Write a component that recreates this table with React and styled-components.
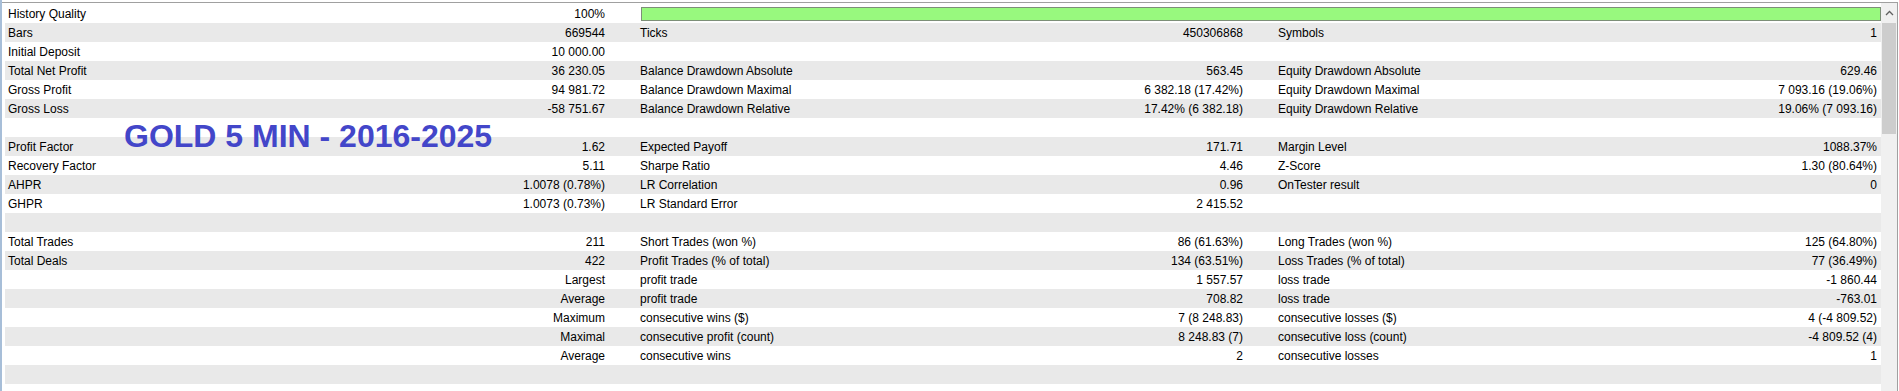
import React from "react";
import styled, { createGlobalStyle } from "styled-components";

const GlobalStyle = createGlobalStyle`
  html, body { margin: 0; padding: 0; background: #ffffff; overflow: hidden; }
  #root { width: 1899px; height: 391px; }
`;

const Frame = styled.div`
  display: flex;
  width: 1899px;
  height: 391px;
  box-sizing: border-box;
  padding-top: 2px;
  border-left: 2px solid #a7bed8;
  overflow: hidden;
  font-family: "Liberation Sans", Arial, sans-serif;
  font-size: 12px;
  color: #000000;
`;

const Panel = styled.div`
  position: relative;
  display: flex;
  flex: 1;
  min-width: 0;
  border-top: 1px solid #a0a0a0;
  border-right: 1px solid #a0a0a0;
  margin-right: 1px;
`;

const Table = styled.div`
  flex: 1;
  min-width: 0;
  display: flex;
  flex-direction: column;
  padding: 1px 0 0 3px;
`;

const Row = styled.div`
  display: grid;
  grid-template-columns: 288px 288px 291px 291px 1fr 1fr;
  column-gap: 28px;
  align-items: center;
  flex: 0 0 19px;
  height: 19px;
  background: ${(p) => (p.$alt ? "#e9e9e9" : "#ffffff")};
`;

const Label = styled.div`
  padding-left: 3px;
  white-space: nowrap;
  overflow: hidden;
`;

const Value = styled.div`
  padding-right: 4px;
  text-align: right;
  white-space: nowrap;
`;

const QualityBar = styled.div`
  grid-column: 3 / -1;
  margin-left: 4px;
  height: 14px;
  box-sizing: border-box;
  background: #98f97e;
  border: 1px solid #7d8f78;
`;

const Watermark = styled.div`
  position: absolute;
  left: 122px;
  top: 117px;
  font-family: "Liberation Sans", Arial, sans-serif;
  font-weight: bold;
  font-size: 32px;
  line-height: 1;
  color: #4346c9;
  white-space: nowrap;
  pointer-events: none;
`;

const Scrollbar = styled.div`
  flex: 0 0 16px;
  display: flex;
  flex-direction: column;
  background: #f0f0f0;
`;

const ScrollArrow = styled.div`
  height: 20px;
  display: flex;
  align-items: center;
  justify-content: center;
`;

const Thumb = styled.div`
  height: 111px;
  margin: 0 1px;
  background: #cdcdcd;
`;

const rows = [
  ["Bars", "669544", "Ticks", "450306868", "Symbols", "1"],
  ["Initial Deposit", "10 000.00", "", "", "", ""],
  ["Total Net Profit", "36 230.05", "Balance Drawdown Absolute", "563.45", "Equity Drawdown Absolute", "629.46"],
  ["Gross Profit", "94 981.72", "Balance Drawdown Maximal", "6 382.18 (17.42%)", "Equity Drawdown Maximal", "7 093.16 (19.06%)"],
  ["Gross Loss", "-58 751.67", "Balance Drawdown Relative", "17.42% (6 382.18)", "Equity Drawdown Relative", "19.06% (7 093.16)"],
  ["", "", "", "", "", ""],
  ["Profit Factor", "1.62", "Expected Payoff", "171.71", "Margin Level", "1088.37%"],
  ["Recovery Factor", "5.11", "Sharpe Ratio", "4.46", "Z-Score", "1.30 (80.64%)"],
  ["AHPR", "1.0078 (0.78%)", "LR Correlation", "0.96", "OnTester result", "0"],
  ["GHPR", "1.0073 (0.73%)", "LR Standard Error", "2 415.52", "", ""],
  ["", "", "", "", "", ""],
  ["Total Trades", "211", "Short Trades (won %)", "86 (61.63%)", "Long Trades (won %)", "125 (64.80%)"],
  ["Total Deals", "422", "Profit Trades (% of total)", "134 (63.51%)", "Loss Trades (% of total)", "77 (36.49%)"],
  ["", "Largest", "profit trade", "1 557.57", "loss trade", "-1 860.44"],
  ["", "Average", "profit trade", "708.82", "loss trade", "-763.01"],
  ["", "Maximum", "consecutive wins ($)", "7 (8 248.83)", "consecutive losses ($)", "4 (-4 809.52)"],
  ["", "Maximal", "consecutive profit (count)", "8 248.83 (7)", "consecutive loss (count)", "-4 809.52 (4)"],
  ["", "Average", "consecutive wins", "2", "consecutive losses", "1"],
  ["", "", "", "", "", ""],
  ["", "", "", "", "", ""],
];

export default function App() {
  return (
    <>
      <GlobalStyle />
      <Frame>
        <Panel>
          <Table>
            <Row>
              <Label>History Quality</Label>
              <Value>100%</Value>
              <QualityBar />
            </Row>
            {rows.map((r, i) => (
              <Row key={i} $alt={i % 2 === 0}>
                <Label>{r[0]}</Label>
                <Value>{r[1]}</Value>
                <Label>{r[2]}</Label>
                <Value>{r[3]}</Value>
                <Label>{r[4]}</Label>
                <Value>{r[5]}</Value>
              </Row>
            ))}
          </Table>
          <Scrollbar>
            <ScrollArrow>
              <svg width="9" height="6" viewBox="0 0 9 6">
                <polyline points="1,5 4.5,1.5 8,5" fill="none" stroke="#606060" strokeWidth="1.3" />
              </svg>
            </ScrollArrow>
            <Thumb />
          </Scrollbar>
          <Watermark>GOLD 5 MIN - 2016-2025</Watermark>
        </Panel>
      </Frame>
    </>
  );
}
